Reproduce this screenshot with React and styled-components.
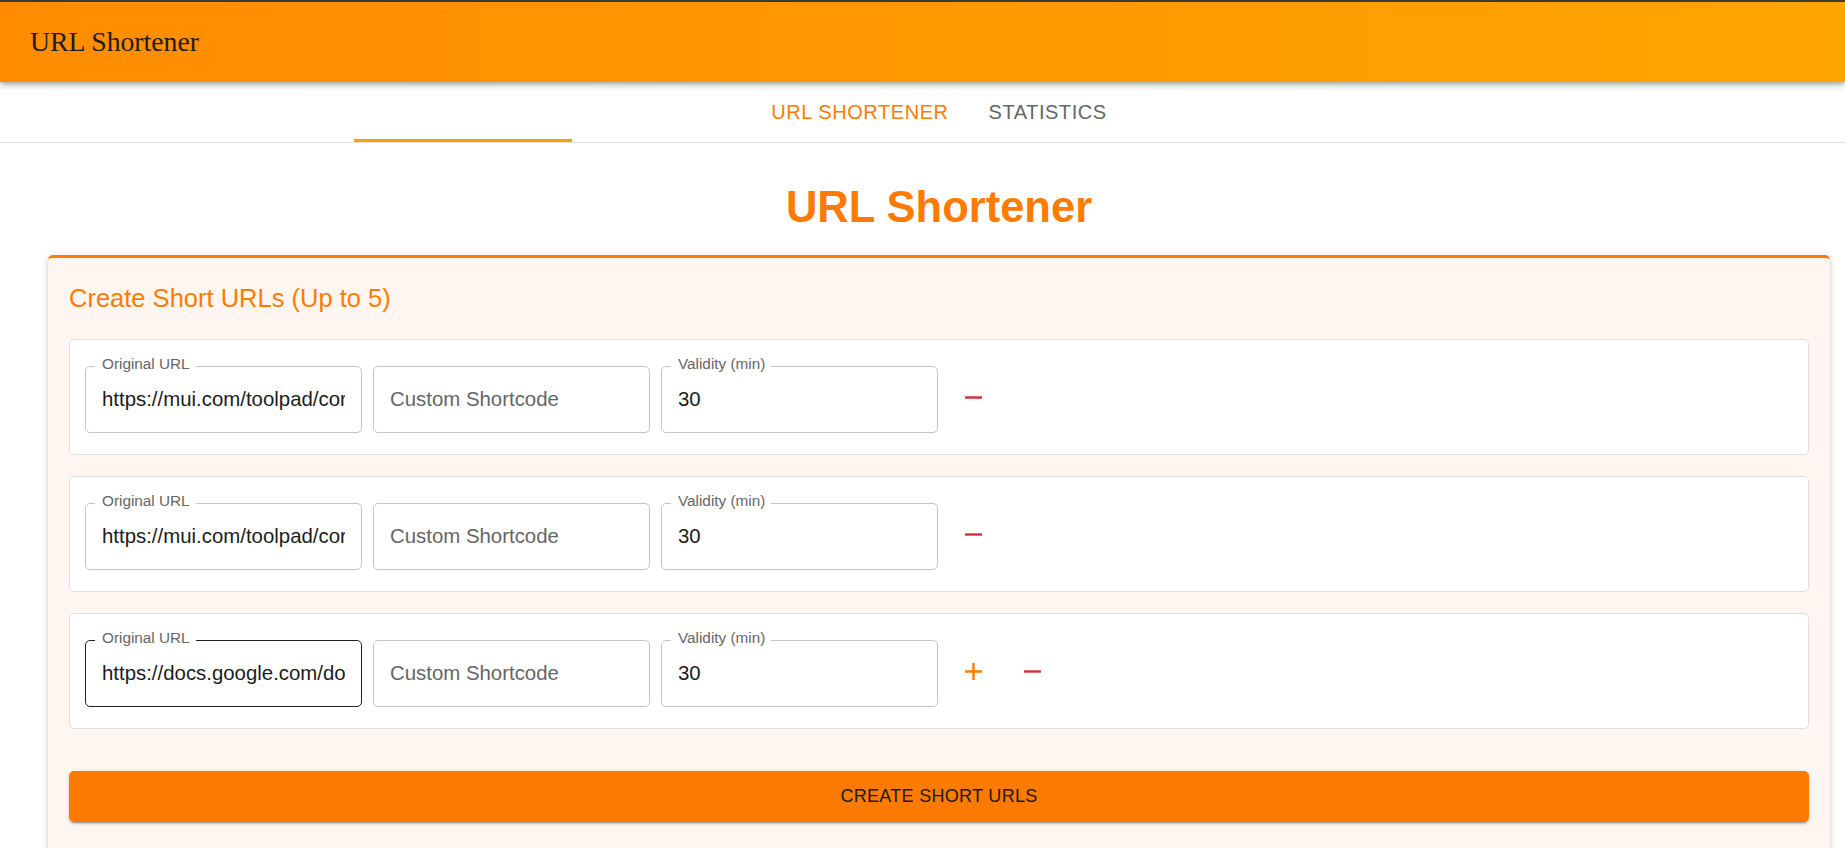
import React from "react";
import styled, { createGlobalStyle } from "styled-components";
import { MdAdd, MdRemove } from "react-icons/md";

const GlobalStyle = createGlobalStyle`
	html, body {
		margin: 0;
		padding: 0;
		overflow: hidden;
		background: #ffffff;
		font-family: "Liberation Sans", Arial, sans-serif;
	}
	* {
		box-sizing: border-box;
	}
`;

const Header = styled.header`
	position: relative;
	z-index: 2;
	height: 82px;
	border-top: 2px solid #3a3a3a;
	display: flex;
	align-items: center;
	padding-left: 30px;
	background: linear-gradient(to right, #ff8c00, #ffa500);
	box-shadow: 0 2px 4px -1px rgba(0, 0, 0, 0.2), 0 4px 5px 0 rgba(0, 0, 0, 0.14),
		0 1px 10px 0 rgba(0, 0, 0, 0.12);
`;

const Brand = styled.h1`
	margin: 0;
	font-family: "Liberation Serif", "Times New Roman", serif;
	font-weight: 400;
	font-size: 27.7px;
	color: #1c1c1c;
`;

const TabBar = styled.nav`
	position: relative;
	height: 61px;
	display: flex;
	justify-content: center;
	padding-left: 33px;
	border-bottom: 1px solid #e0e0e0;
	background: #ffffff;
`;

const Tab = styled.button`
	border: none;
	background: transparent;
	padding: 0 20px;
	font-family: "Liberation Sans", Arial, sans-serif;
	font-size: 20px;
	letter-spacing: 0.55px;
	text-transform: uppercase;
	color: ${(props) => (props.$active ? "#ff7b00" : "#666666")};
	cursor: pointer;
`;

const Indicator = styled.span`
	position: absolute;
	left: 354px;
	bottom: 0;
	width: 218px;
	height: 3px;
	background: #ffa000;
`;

const Main = styled.main`
	padding: 0 15px 0 48px;
`;

const PageTitle = styled.h2`
	margin: 38px 0 21px;
	text-align: center;
	font-size: 43.5px;
	line-height: 53px;
	font-weight: 700;
	color: #ff7b00;
`;

const Card = styled.section`
	background: #fff6f1;
	border-top: 3px solid #ff7a00;
	border-radius: 5px;
	padding: 20px 21px 40px;
	box-shadow: 0 3px 3px -2px rgba(0, 0, 0, 0.2), 0 3px 4px 0 rgba(0, 0, 0, 0.14),
		0 1px 8px 0 rgba(0, 0, 0, 0.12);
`;

const CardTitle = styled.h3`
	margin: 0 0 21px;
	font-size: 25.5px;
	line-height: 40px;
	font-weight: 400;
	color: #ff7b00;
`;

const RowList = styled.div`
	display: flex;
	flex-direction: column;
	gap: 21px;
`;

const Row = styled.div`
	display: flex;
	align-items: center;
	gap: 11px;
	padding: 26px 16px 21px 15px;
	background: #ffffff;
	border: 1px solid #e0e0e0;
	border-radius: 5px;
`;

const Field = styled.div`
	position: relative;
	flex: 0 0 277px;
	height: 67px;
	border: 1px solid ${(props) => (props.$focused ? "#212121" : "#c4c4c4")};
	border-radius: 5px;
`;

const Label = styled.label`
	position: absolute;
	top: -11px;
	left: 9px;
	padding: 0 6px 0 7px;
	background: #ffffff;
	font-size: 15.3px;
	line-height: 16px;
	color: #666666;
`;

const Input = styled.input`
	width: 100%;
	height: 100%;
	padding: 0 16px;
	border: none;
	outline: none;
	background: transparent;
	font-family: "Liberation Sans", Arial, sans-serif;
	font-size: 20.4px;
	color: #1c1c1c;

	&::placeholder {
		color: #666666;
		opacity: 1;
	}
`;

const Actions = styled.div`
	display: flex;
	gap: 11px;
	margin-left: 0;
	margin-bottom: 4px;
`;

const IconButton = styled.button`
	width: 48px;
	height: 48px;
	display: flex;
	align-items: center;
	justify-content: center;
	border: none;
	border-radius: 50%;
	background: transparent;
	color: ${(props) => (props.$danger ? "#d32f2f" : "#ff7b00")};
	cursor: pointer;
	padding: 0;
`;

const SubmitButton = styled.button`
	display: block;
	width: 100%;
	height: 51px;
	margin-top: 42px;
	border: none;
	border-radius: 5px;
	background: #ff7a00;
	color: #1a1a1a;
	font-family: "Liberation Sans", Arial, sans-serif;
	font-size: 18px;
	letter-spacing: 0.3px;
	text-transform: uppercase;
	box-shadow: 0 3px 1px -2px rgba(0, 0, 0, 0.2), 0 2px 2px 0 rgba(0, 0, 0, 0.14),
		0 1px 5px 0 rgba(0, 0, 0, 0.12);
	cursor: pointer;
`;

const rows = [
	{ url: "https://mui.com/toolpad/core/introduction/", validity: "30" },
	{ url: "https://mui.com/toolpad/core/introduction/", validity: "30" },
	{
		url: "https://docs.google.com/document/d/1a2b3c/edit",
		validity: "30",
		focused: true,
		last: true,
	},
];

const App = () => {
	return (
		<>
			<GlobalStyle />
			<Header>
				<Brand>URL Shortener</Brand>
			</Header>
			<TabBar>
				<Tab $active>URL Shortener</Tab>
				<Tab>Statistics</Tab>
				<Indicator />
			</TabBar>
			<Main>
				<PageTitle>URL Shortener</PageTitle>
				<Card>
					<CardTitle>Create Short URLs (Up to 5)</CardTitle>
					<RowList>
						{rows.map((row, i) => (
							<Row key={i}>
								<Field $focused={row.focused}>
									<Label>Original URL</Label>
									<Input defaultValue={row.url} readOnly />
								</Field>
								<Field>
									<Input placeholder="Custom Shortcode" readOnly />
								</Field>
								<Field>
									<Label>Validity (min)</Label>
									<Input defaultValue={row.validity} readOnly />
								</Field>
								<Actions>
									{row.last && (
										<IconButton>
											<MdAdd size={29} />
										</IconButton>
									)}
									<IconButton $danger>
										<MdRemove size={29} />
									</IconButton>
								</Actions>
							</Row>
						))}
					</RowList>
					<SubmitButton>Create Short URLs</SubmitButton>
				</Card>
			</Main>
		</>
	);
};

export default App;
